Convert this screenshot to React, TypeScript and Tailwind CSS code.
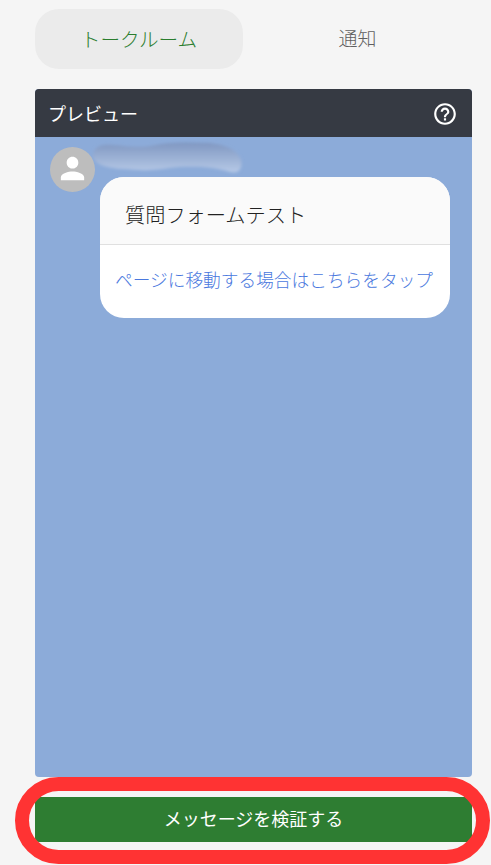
import { MdHelpOutline, MdPerson } from 'react-icons/md';

const font = { fontFamily: '"Noto Sans CJK JP", "Noto Sans", sans-serif' };

// blurred-out account name
const NameSmudge = () => (
  <svg width="160" height="40" viewBox="0 0 160 40" className="-mt-[9px] -ml-[12px] block">
    <defs>
      <linearGradient id="smudge" x1="0" y1="0" x2="0" y2="1">
        <stop offset="0" stopColor="#7f97c1" />
        <stop offset="1" stopColor="#b6c9e7" />
      </linearGradient>
      <filter id="soft" x="-10%" y="-30%" width="120%" height="160%">
        <feGaussianBlur stdDeviation="1.8" />
      </filter>
    </defs>
    <path
      d="M5 17 C6 8 14 6 24 7 C40 8 50 10 62 8 C78 4 100 4 122 5 C138 7 150 12 153 22 C155 32 150 36 142 34 C128 29 110 28 92 29 C78 30 66 33 52 32 C36 31 22 31 13 27 C8 24 5 22 5 17 Z"
      fill="url(#smudge)"
      filter="url(#soft)"
    />
  </svg>
);

const App = () => {
  return (
    <div
      style={font}
      className="relative h-[865px] w-[491px] overflow-hidden bg-[#f5f5f5] pt-[9px] pl-[35px] font-light"
    >
      {/* Tabs */}
      <div className="flex w-[437px] items-center">
        <div className="flex h-[60px] w-[208px] items-center justify-center rounded-[24px] bg-[#ebebeb] text-[19.6px] text-[#2a7d2e]">
          トークルーム
        </div>
        <div className="flex h-[60px] w-[229px] items-center justify-center pb-[2px] text-[19px] text-[#5f5f5f]">
          通知
        </div>
      </div>

      {/* Preview */}
      <div className="mt-5 flex h-[688px] w-[437px] flex-col overflow-hidden rounded-[4px] bg-[#8cabd9]">
        <div className="flex h-[48px] shrink-0 items-center justify-between bg-[#363a43] pr-[14px] pl-[13px] text-white">
          <span className="text-[18px] font-normal">プレビュー</span>
          <MdHelpOutline className="mt-[2px] size-[26px]" />
        </div>
        <div className="flex gap-[5px] pt-[10px] pl-[15px]">
          <div className="relative z-10 flex size-[45px] shrink-0 items-center justify-center rounded-full bg-[#bdbdbd] text-white">
            <MdPerson className="mr-[1px] mb-[2px] size-[35px]" />
          </div>
          <div className="flex flex-col">
            <div className="h-[30px] w-[150px]">
              <NameSmudge />
            </div>
            <div className="w-[350px] overflow-hidden rounded-[24px] bg-white">
              <div className="flex h-[68px] items-center border-b border-[#e0e0e0] bg-[#fafafa] pt-[10px] pl-[25px] text-[20.2px] text-[#222222]">
                質問フォームテスト
              </div>
              <div className="flex h-[73px] items-center justify-center pr-[2px] pb-[4px] text-[17.7px] text-[#4a78de]">
                ページに移動する場合はこちらをタップ
              </div>
            </div>
          </div>
        </div>
      </div>

      {/* Action */}
      <button className="mt-5 flex h-[45px] w-[437px] items-center justify-center rounded-[4px] bg-[#2e7d32] pb-[3px] text-[18px] font-normal text-white">
        メッセージを検証する
      </button>

      {/* Red annotation ring */}
      <div className="pointer-events-none absolute top-[777px] left-[15px] h-[87px] w-[475px] rounded-[44px] border-[14px] border-[#ff3333]" />
    </div>
  );
};

export default App;
